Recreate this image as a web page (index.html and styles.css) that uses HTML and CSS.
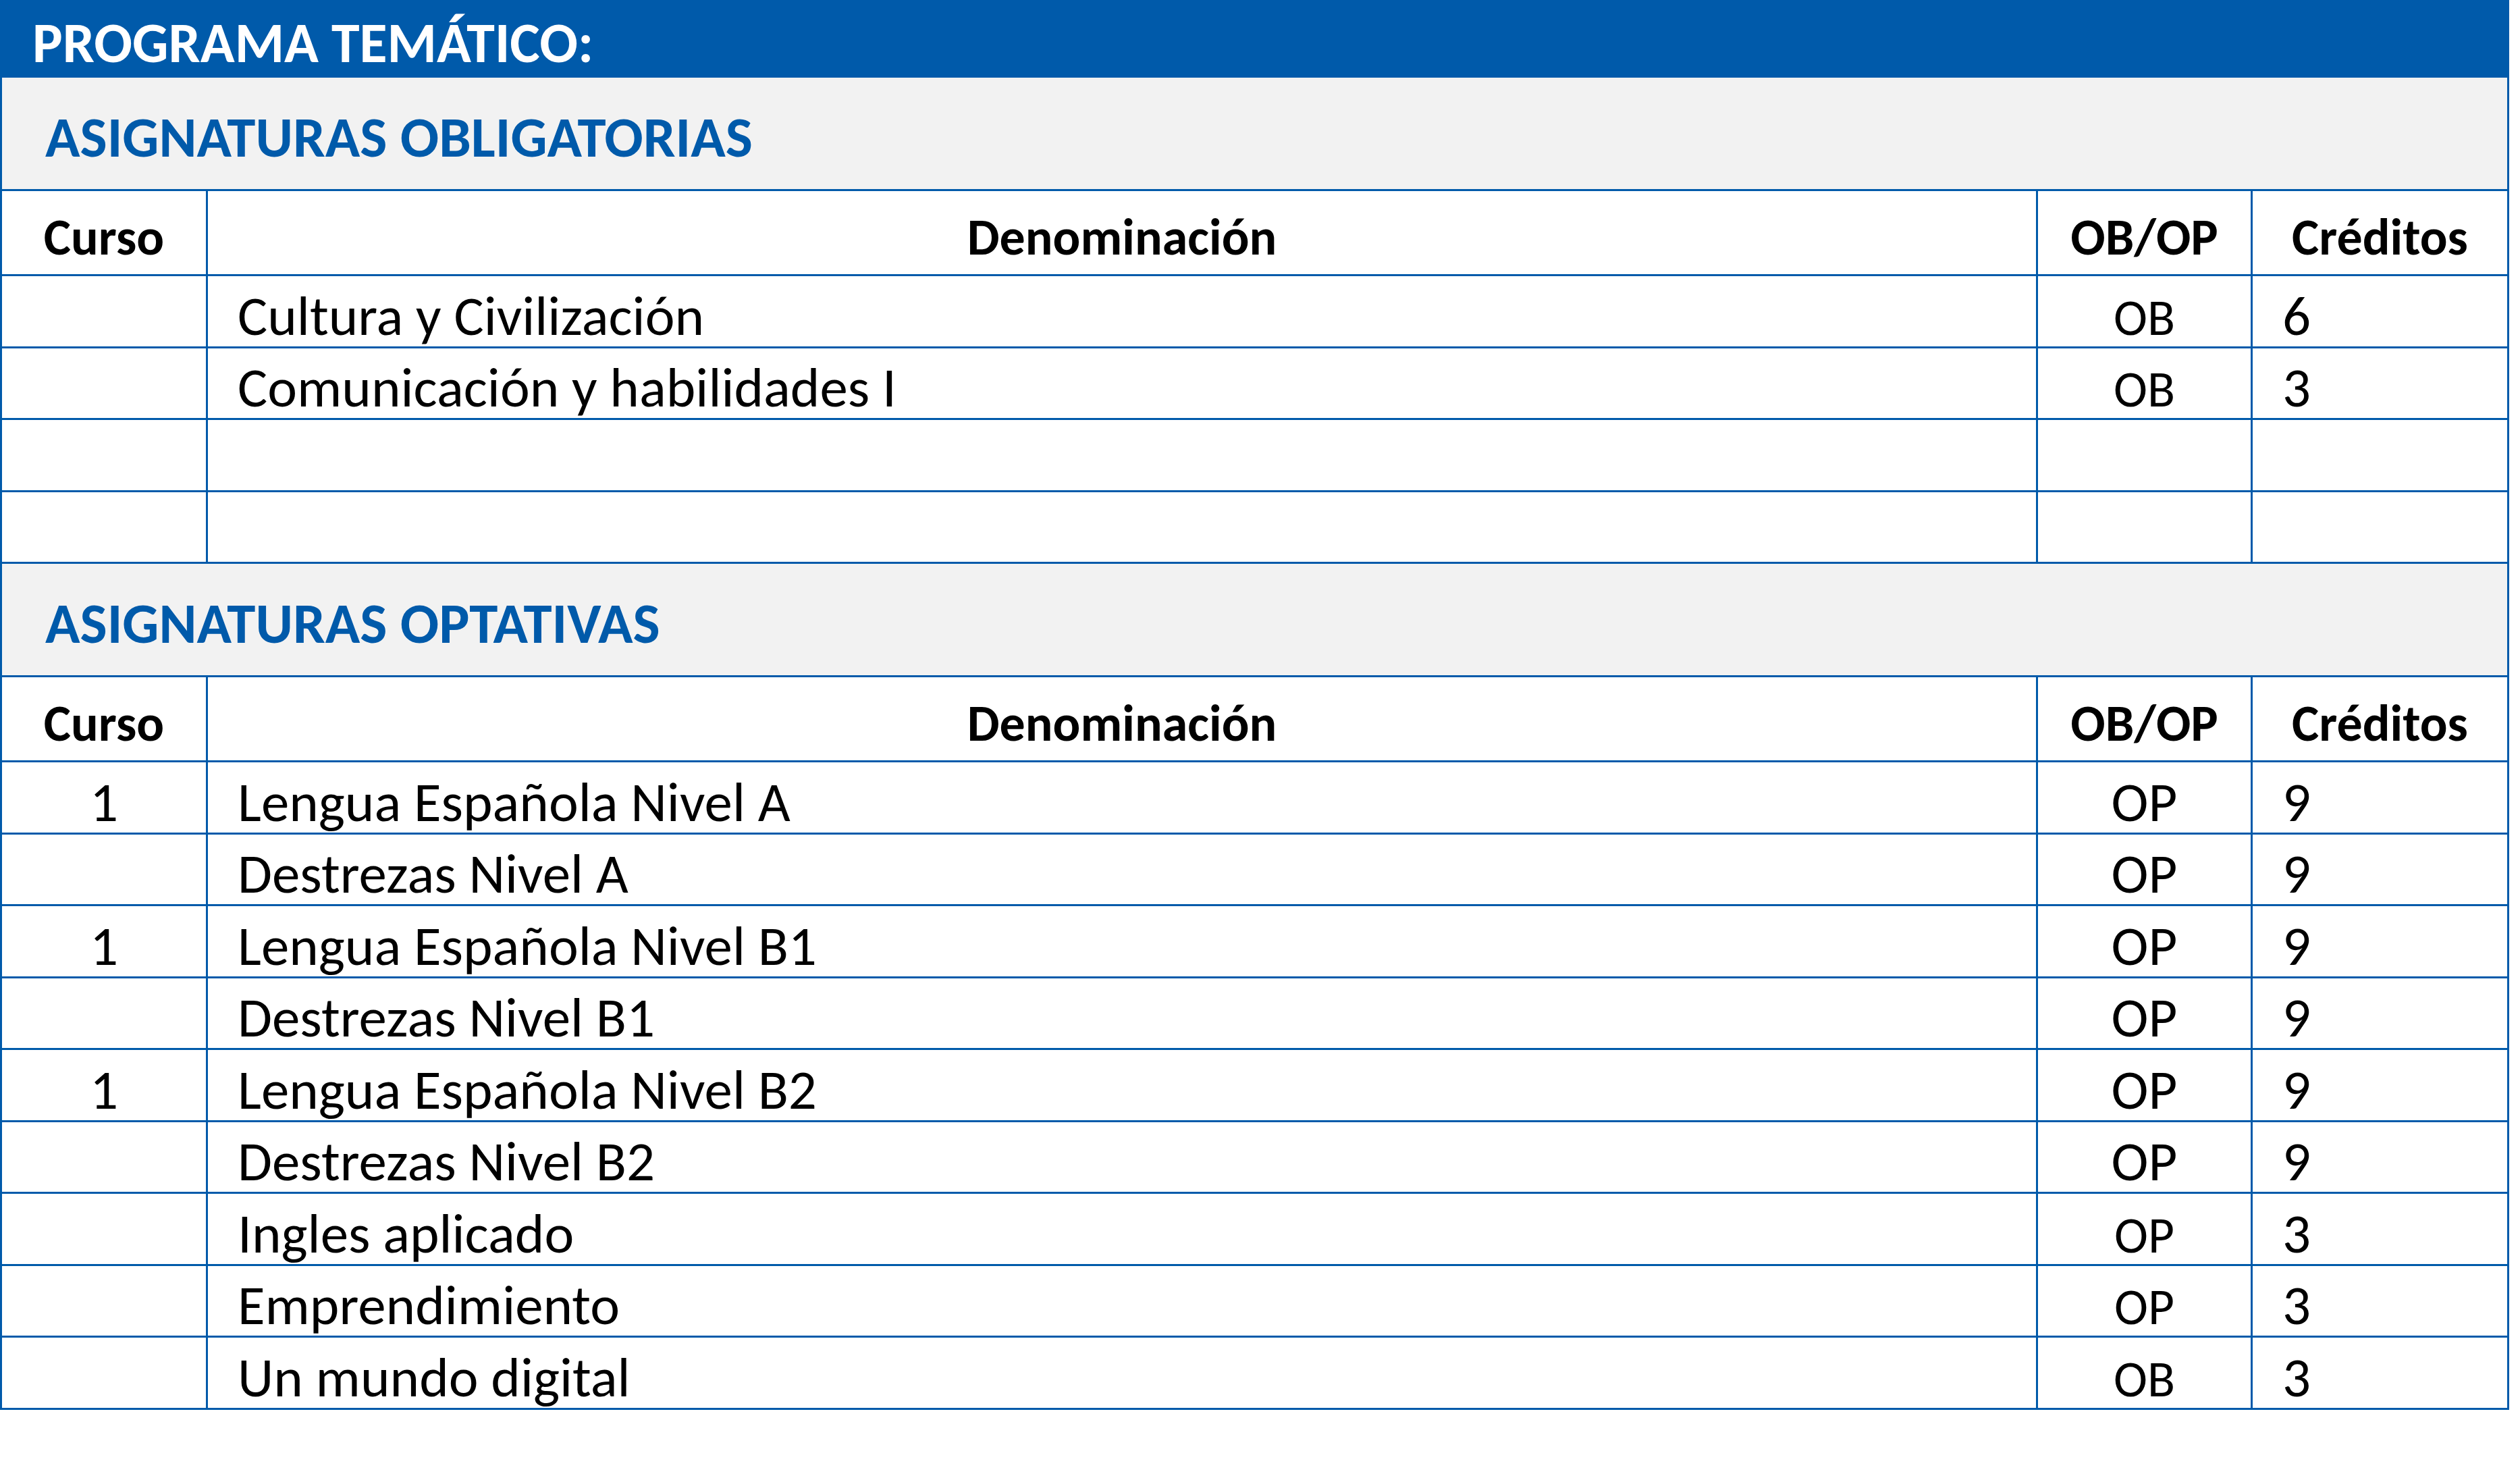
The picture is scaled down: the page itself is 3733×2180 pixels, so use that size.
FILE: index.html
```html
<!DOCTYPE html>
<html lang="es">
<head>
<meta charset="utf-8">
<title>Programa temático</title>
<link rel="stylesheet" href="styles.css">
</head>
<body>
<div class="sheet">
  <div class="banner">PROGRAMA TEMÁTICO:</div>
  <table class="plan">
    <colgroup>
      <col class="c-curso">
      <col class="c-den">
      <col class="c-obop">
      <col class="c-cred">
    </colgroup>
    <tbody>
      <tr class="section"><td colspan="4">ASIGNATURAS OBLIGATORIAS</td></tr>
      <tr class="head"><td>Curso</td><td>Denominación</td><td>OB/OP</td><td>Créditos</td></tr>
      <tr class="row"><td class="ctr"></td><td class="name">Cultura y Civilización</td><td class="ctr"><span class="sm">OB</span></td><td class="cred">6</td></tr>
      <tr class="row"><td class="ctr"></td><td class="name">Comunicación y habilidades I</td><td class="ctr"><span class="sm">OB</span></td><td class="cred">3</td></tr>
      <tr class="row"><td class="ctr"></td><td class="name"></td><td class="ctr"></td><td class="cred"></td></tr>
      <tr class="row"><td class="ctr"></td><td class="name"></td><td class="ctr"></td><td class="cred"></td></tr>

      <tr class="section"><td colspan="4">ASIGNATURAS OPTATIVAS</td></tr>
      <tr class="head"><td>Curso</td><td>Denominación</td><td>OB/OP</td><td>Créditos</td></tr>
      <tr class="row"><td class="ctr">1</td><td class="name">Lengua Española Nivel A</td><td class="ctr">OP</td><td class="cred">9</td></tr>
      <tr class="row"><td class="ctr"></td><td class="name">Destrezas Nivel A</td><td class="ctr">OP</td><td class="cred">9</td></tr>
      <tr class="row"><td class="ctr">1</td><td class="name">Lengua Española Nivel B1</td><td class="ctr">OP</td><td class="cred">9</td></tr>
      <tr class="row"><td class="ctr"></td><td class="name">Destrezas Nivel B1</td><td class="ctr">OP</td><td class="cred">9</td></tr>
      <tr class="row"><td class="ctr">1</td><td class="name">Lengua Española Nivel B2</td><td class="ctr">OP</td><td class="cred">9</td></tr>
      <tr class="row"><td class="ctr"></td><td class="name">Destrezas Nivel B2</td><td class="ctr">OP</td><td class="cred">9</td></tr>
      <tr class="row"><td class="ctr"></td><td class="name">Ingles aplicado</td><td class="ctr"><span class="sm">OP</span></td><td class="cred">3</td></tr>
      <tr class="row"><td class="ctr"></td><td class="name">Emprendimiento</td><td class="ctr"><span class="sm">OP</span></td><td class="cred">3</td></tr>
      <tr class="row"><td class="ctr"></td><td class="name">Un mundo digital</td><td class="ctr"><span class="sm">OB</span></td><td class="cred">3</td></tr>
    </tbody>
  </table>
</div>
</body>
</html>
```

FILE: styles.css
```css
* { box-sizing: border-box; }

html, body {
  margin: 0;
  padding: 0;
  background: #ffffff;
}

body {
  font-family: "Carlito", "Lato", "Liberation Sans", sans-serif;
  color: #000000;
}

.sheet {
  width: 3717px;
}

.banner {
  background: #005aaa;
  color: #ffffff;
  font-weight: 700;
  font-size: 84px;
  line-height: 84px;
  padding: 22px 0 9px 48px;
  height: 115px;
  white-space: nowrap;
}

.plan {
  width: 3717px;
  table-layout: fixed;
  border-collapse: separate;
  border-spacing: 0;
  border-left: 3px solid #005aaa;
}

.c-curso { width: 305px; }
.c-den { width: 2711px; }
.c-obop { width: 318px; }
.c-cred { width: 380px; }

.plan td {
  border-right: 3px solid #005aaa;
  border-bottom: 3px solid #005aaa;
  padding: 0;
  white-space: nowrap;
}

.section td {
  background: #f2f2f2;
  color: #005aaa;
  font-weight: 700;
  font-size: 85px;
  line-height: 85px;
  padding: 46px 0 34px 64px;
  height: 166px;
}

.head td {
  font-weight: 700;
  font-size: 76px;
  line-height: 76px;
  padding: 30px 0 17px 0;
  height: 125px;
  text-align: center;
}

.row td {
  font-size: 83px;
  line-height: 86px;
  padding: 14px 0 0 0;
  height: 106.5px;
}

.row td.ctr { text-align: center; }
.row td.name { padding-left: 44px; }
.row td.cred { padding-left: 44px; }

.sm {
  font-size: 75.5px;
  line-height: 0;
}
```
